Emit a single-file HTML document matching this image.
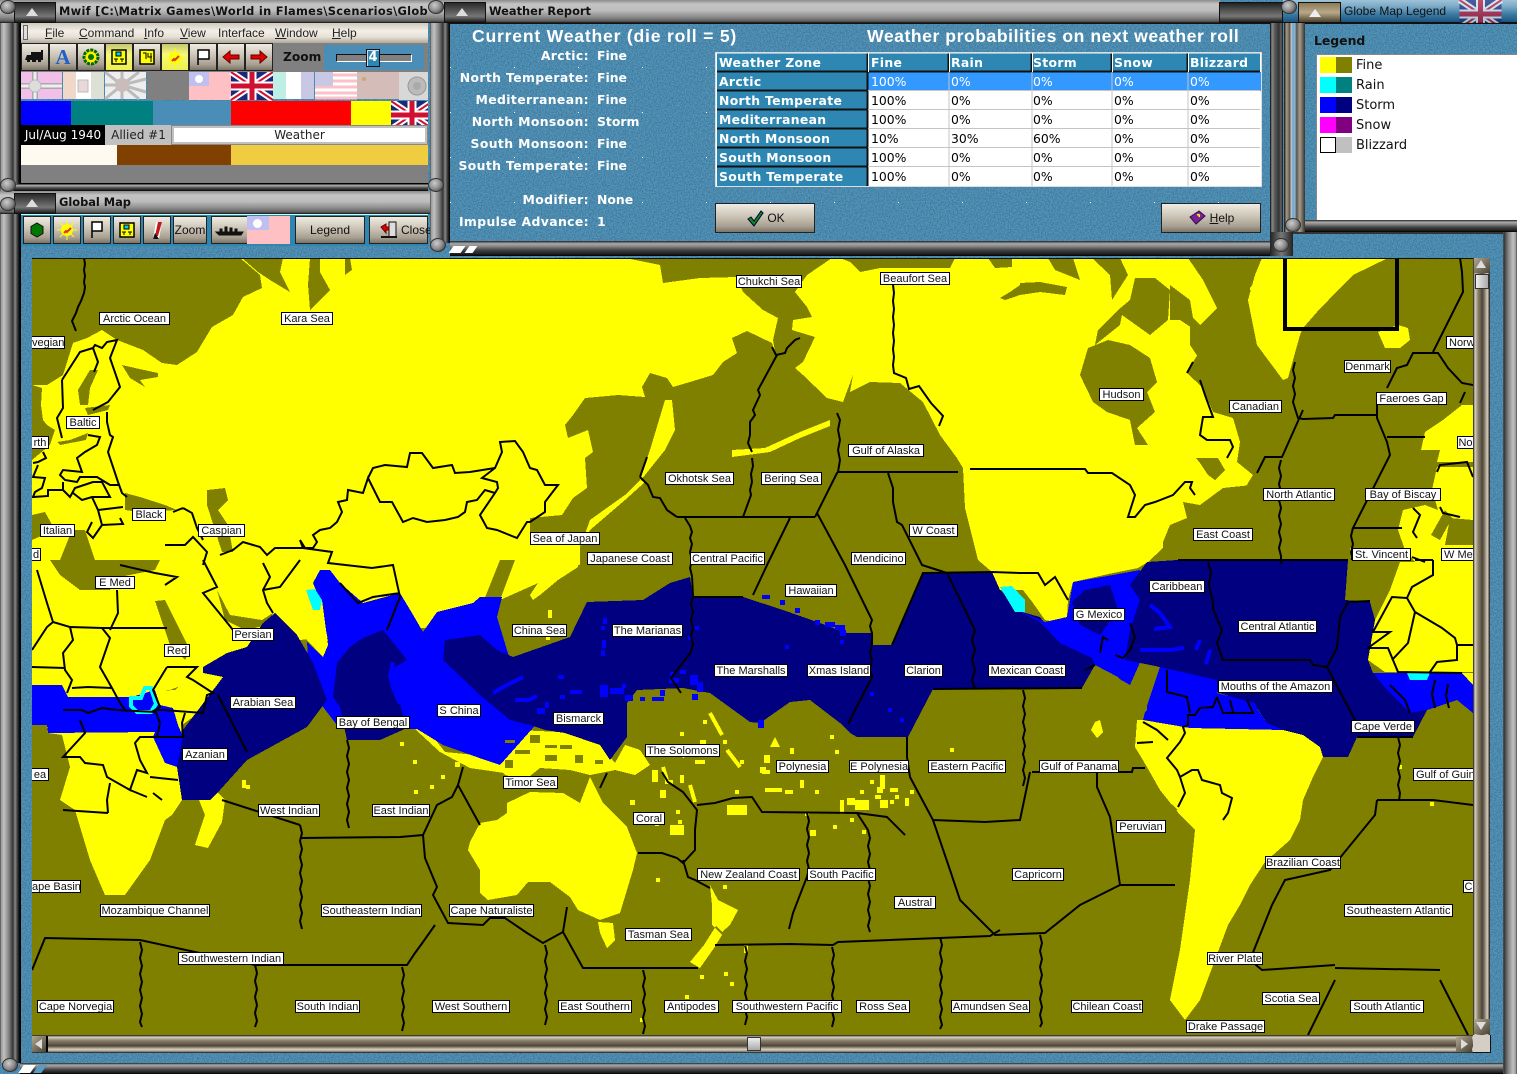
<!DOCTYPE html>
<html lang="en"><head><meta charset="utf-8"><title>Mwif Weather Report</title>
<style>
html,body{margin:0;padding:0;background:#000;width:1517px;height:1074px;overflow:hidden}
#p{position:relative;width:1517px;height:1074px;overflow:hidden;background:#4a8db6;font-family:"Liberation Sans",sans-serif}
#p div,#p span.a{position:absolute;box-sizing:border-box}
.t{background:linear-gradient(#8c8c8c,#c4c4c4 18%,#bdbdbd 45%,#8a8a8a 75%,#5c5c5c 92%,#111);height:23px}
.tt{font:bold 11.4px "DejaVu Sans",sans-serif;color:#111;white-space:nowrap;line-height:14px;overflow:hidden}
.blk{background:linear-gradient(#2a2a2a,#555 40%,#777 70%,#1c1c1c);border:1px solid #111;width:42px;height:21px;top:2px}
.blk:after{content:"";position:absolute;left:11px;top:5px;border:6px solid transparent;border-top:0;border-bottom:8px solid #ddd}
.vf{background:linear-gradient(90deg,#333 0,#999 1px,#c0c0c0 4px,#808080 9px,#333 13px,#8a8a8a 15px,#2a2a2a 18px,#000 20px)}
.hf{background:linear-gradient(#222,#aaa 18%,#888 35%,#444 60%,#222 85%,#000)}
.sc{width:16px;height:14px;border-radius:50%;background:radial-gradient(circle at 40% 35%,#ccc,#8c8c8c 50%,#444 85%);border:1px solid #333}
.b{background:linear-gradient(#f0ece4,#e0dace 20%,#c6bfb1 50%,#a79f90 80%,#7b7366);border:1px solid #222;font-size:12px;color:#111;text-align:center;white-space:nowrap}
.by{background:linear-gradient(#c6c67a,#f7f77a 40%,#eeee50);}
.l{font:bold 12.4px "DejaVu Sans",sans-serif;color:#fff;white-space:nowrap;line-height:16px;text-align:right;letter-spacing:.38px}
.v{font:bold 12.4px "DejaVu Sans",sans-serif;color:#fff;white-space:nowrap;line-height:16px}
.h{font:bold 17.6px "Liberation Sans",sans-serif;color:#fff;white-space:nowrap}
.c{font:12.4px/20px "DejaVu Sans",sans-serif;white-space:nowrap;overflow:hidden;padding-left:2px;height:19px}
.cb{color:#fff;font-weight:bold;letter-spacing:.33px}
.m{position:absolute;background:#fff;border:1px solid #000;font-size:11px;line-height:12px;color:#111;text-align:center;white-space:nowrap;height:13px;overflow:hidden;font-family:"Liberation Sans",sans-serif}
.mn{font-size:12px;color:#222;top:27px;white-space:nowrap;line-height:13px}
.mn u{text-decoration:underline}
.lg{font:13px/16px "DejaVu Sans",sans-serif;color:#111;left:1356px;white-space:nowrap}
.sw{width:16px;height:16px;left:1320px}.sw2{width:16px;height:16px;left:1336px}
</style></head><body><div id="p">

<svg style="position:absolute;left:0;top:0" width="1517" height="1074" viewBox="0 0 1517 1074">
<defs><filter id="nz" x="0" y="0" width="100%" height="100%"><feTurbulence type="fractalNoise" baseFrequency=".75" numOctaves="2" seed="3"/><feColorMatrix values="0 0 0 0 0 0 0 0 0 0 0 0 0 0 0 .55 0 0 0 -.18"/></filter>
<pattern id="spk" width="64" height="45" patternUnits="userSpaceOnUse" x="2" y="22"><rect width="1" height="1" fill="#fff"/></pattern></defs>
<rect width="1517" height="1074" fill="#5398c0"/>
<rect width="1517" height="1074" filter="url(#nz)"/>
<rect x="450" y="24" width="820" height="217" fill="url(#spk)"/>
</svg>

<!-- main left frame -->
<div class="vf" style="left:0;top:23px;width:21px;height:1040px"></div>
<div class="vf" style="left:1503px;top:232px;width:14px;height:842px;transform:scaleX(-1)"></div>

<!-- Mwif window title -->
<div class="t" style="left:0;top:0;width:430px"></div>
<div class="blk" style="left:14px"></div>
<div class="sc" style="left:0;top:0"></div>
<div class="tt" style="left:59px;top:4px;width:369px;letter-spacing:.3px">Mwif [C:\Matrix Games\World in Flames\Scenarios\Global War.wif]</div>
<!-- menu -->
<div style="left:21px;top:23px;width:407px;height:20px;background:linear-gradient(#cfc9bd,#f3efe7 40%,#e6e0d6 70%,#b0a99c)"></div>
<div style="left:23px;top:25px;width:5px;height:15px;border:1px solid #666;background:#ddd"></div>
<div class="mn" style="left:45px"><u>F</u>ile</div>
<div class="mn" style="left:79px"><u>C</u>ommand</div>
<div class="mn" style="left:144px"><u>I</u>nfo</div>
<div class="mn" style="left:180px"><u>V</u>iew</div>
<div class="mn" style="left:218px">Interface</div>
<div class="mn" style="left:275px"><u>W</u>indow</div>
<div class="mn" style="left:332px"><u>H</u>elp</div>

<!-- toolbar 1 -->
<div style="left:21px;top:43px;width:407px;height:29px;background:#808080"></div>
<div class="b" style="left:21px;top:43px;width:28px;height:28px"><svg width="26" height="26" viewBox="0 0 26 26"><path d="M5 11h4v-3h10v-2h2v10h-2v2h-3v-2h-2v2h-4v-2h-2v2h-3v-2h-2z" fill="#111"/></svg></div>
<div class="b" style="left:49px;top:43px;width:28px;height:28px;font:bold 21px/26px 'Liberation Serif',serif;color:#2060c8">A</div>
<div class="b" style="left:77px;top:43px;width:28px;height:28px"><svg width="26" height="26" viewBox="0 0 26 26"><circle cx="13" cy="13" r="7" fill="#fff000" stroke="#060" stroke-width="3" stroke-dasharray="3 1"/><circle cx="13" cy="13" r="3" fill="#070"/></svg></div>
<div class="b by" style="left:105px;top:43px;width:28px;height:28px"><svg width="26" height="26" viewBox="0 0 26 26"><rect x="6" y="6" width="14" height="14" fill="#ff0" stroke="#000" stroke-width="1.5"/><rect x="10" y="8" width="5" height="4" fill="#0cf" stroke="#000"/><path d="M8 15h4M14 15h4M10 15v3M16 15v3" stroke="#000"/></svg></div>
<div class="b" style="left:133px;top:43px;width:28px;height:28px"><svg width="26" height="26" viewBox="0 0 26 26"><rect x="6" y="6" width="14" height="14" fill="#ff0" stroke="#000" stroke-width="1.5"/><path d="M9 9h3v6M14 9v4h4M17 9v9" stroke="#000" fill="none"/></svg></div>
<div class="b by" style="left:161px;top:43px;width:28px;height:28px"><svg width="26" height="26" viewBox="0 0 26 26"><circle cx="13" cy="14" r="6" fill="#ff0"/><path d="M13 4v20M3 14h20M6 7l14 14M20 7L6 21" stroke="#ff0"/><path d="M10 17l2-2 1 1 4-4" stroke="#e03030" stroke-width="2" fill="none"/></svg></div>
<div class="b" style="left:189px;top:43px;width:28px;height:28px"><svg width="26" height="26" viewBox="0 0 26 26"><path d="M8 21V6h11v9H8" fill="#fff" stroke="#000" stroke-width="1.5"/></svg></div>
<div class="b" style="left:217px;top:43px;width:28px;height:28px"><svg width="26" height="26" viewBox="0 0 26 26"><path d="M5 13l7-6v4h9v4h-9v4z" fill="#e00000" stroke="#600"/></svg></div>
<div class="b" style="left:245px;top:43px;width:28px;height:28px"><svg width="26" height="26" viewBox="0 0 26 26"><path d="M21 13l-7-6v4H5v4h9v4z" fill="#e00000" stroke="#600"/></svg></div>
<div style="left:283px;top:50px;font:bold 12.2px 'DejaVu Sans',sans-serif;color:#111">Zoom</div>
<div style="left:324px;top:45px;width:100px;height:25px;background:#4a8db6"></div>
<div style="left:336px;top:54px;width:76px;height:8px;background:#808080;border:1px solid #111;border-top-color:#111;border-right-color:#fff;border-bottom-color:#fff"></div>
<div style="left:366px;top:49px;width:14px;height:18px;background:#2e87b2;border:1px solid #111;box-shadow:inset 1px 1px 0 #cde;color:#fff;font:bold 13px/16px 'DejaVu Sans',sans-serif;text-align:center">4</div>

<!-- flags -->
<svg style="position:absolute;left:21px;top:72px" width="407" height="29" viewBox="0 0 407 29">
<defs><g id="uk"><rect width="42" height="28" fill="#1a2a7a"/><path d="M0 0L42 28M42 0L0 28" stroke="#fff" stroke-width="6"/><path d="M0 0L42 28M42 0L0 28" stroke="#d01030" stroke-width="2"/><path d="M21 0V28M0 14H42" stroke="#fff" stroke-width="9"/><path d="M21 0V28M0 14H42" stroke="#d01030" stroke-width="5"/></g></defs>
<rect width="41" height="27" fill="#f2bfe8"/><path d="M0 14h41M14 0v27" stroke="#aaa" stroke-width="6"/><path d="M0 14h41M14 0v27" stroke="#eee" stroke-width="3"/><circle cx="14" cy="14" r="6" fill="#ddd" stroke="#bbb"/>
<g transform="translate(42)"><rect width="41" height="27" fill="#fff"/><rect width="13" height="27" fill="#f0d8c8"/><rect x="28" width="13" height="27" fill="#dde0d4"/><rect x="15" y="8" width="10" height="12" fill="#e8d8d8" stroke="#bbb"/></g>
<g transform="translate(84)"><rect width="41" height="27" fill="#eee"/><g stroke="#bbb" stroke-width="3"><path d="M17 13L0 0M17 13L17 0M17 13L34 0M17 13L41 7M17 13L41 20M17 13L34 27M17 13L17 27M17 13L0 27M17 13L0 13"/></g><circle cx="17" cy="13" r="7" fill="#cbbcbc"/></g>
<rect x="126" width="42" height="28" fill="#808080"/>
<g transform="translate(168)"><rect width="42" height="28" fill="#ffc0c4"/><rect width="20" height="14" fill="#bfbff0"/><circle cx="10" cy="7" r="4" fill="#fff"/></g>
<use href="#uk" x="210"/>
<g transform="translate(252)"><rect width="41" height="27" fill="#fff"/><rect width="13" height="27" fill="#bfeee4"/><rect x="28" width="13" height="27" fill="#c8c8e4"/></g>
<g transform="translate(294)"><rect width="42" height="27" fill="#fff"/><path d="M0 3h42M0 9h42M0 15h42M0 21h42M0 26h42" stroke="#fbc0c8" stroke-width="3"/><rect width="18" height="14" fill="#c8c8e4"/></g>
<g transform="translate(336)"><rect width="42" height="27" fill="#d4bcb8"/><circle cx="7" cy="7" r="2" fill="#c8aa70"/></g>
<g transform="translate(378)"><rect width="29" height="28" fill="#d8d8d8"/><circle cx="18" cy="14" r="9" fill="#bbb" stroke="#999"/><circle cx="18" cy="14" r="4" fill="#aaa"/></g>
</svg>

<!-- colour bar -->
<div style="left:21px;top:101px;width:50px;height:24px;background:#0000ff"></div>
<div style="left:71px;top:101px;width:82px;height:24px;background:#008080"></div>
<div style="left:153px;top:101px;width:78px;height:24px;background:#4a8db6"></div>
<div style="left:231px;top:101px;width:120px;height:24px;background:#ff0000"></div>
<div style="left:351px;top:101px;width:40px;height:24px;background:#ffff00"></div>
<svg style="position:absolute;left:391px;top:101px" width="37" height="24" viewBox="0 0 37 24"><use href="#uk"/></svg>
<!-- status -->
<div style="left:21px;top:125px;width:84px;height:20px;background:#000;color:#fff;font:12px/20px 'DejaVu Sans',sans-serif;text-align:center;white-space:nowrap">Jul/Aug 1940</div>
<div style="left:105px;top:125px;width:67px;height:20px;background:#c0c0c0;color:#222;font:12px/20px 'DejaVu Sans',sans-serif;text-align:center;white-space:nowrap">Allied #1</div>
<div style="left:171px;top:125px;width:257px;height:20px;background:#fff;border:3px solid #c0c0c0;outline:1px solid #888;outline-offset:-1px;color:#222;font:12px/15px 'DejaVu Sans',sans-serif;text-align:center">Weather</div>
<div style="left:21px;top:145px;width:96px;height:20px;background:#fffaf0"></div>
<div style="left:117px;top:145px;width:114px;height:20px;background:#804000"></div>
<div style="left:231px;top:145px;width:197px;height:20px;background:#f0cc40"></div>
<div style="left:21px;top:165px;width:407px;height:19px;background:#808080;border-bottom:1px solid #000"></div>
<div class="hf" style="left:14px;top:184px;width:414px;height:7px"></div>

<!-- Global map title -->
<div class="t" style="left:0;top:191px;width:430px"></div>
<div class="blk" style="left:14px;top:193px"></div>
<div class="sc" style="left:0;top:178px"></div>
<div class="sc" style="left:0;top:197px"></div>
<div class="tt" style="left:59px;top:195px;width:300px">Global Map</div>

<!-- toolbar 2 -->
<div style="left:21px;top:214px;width:407px;height:32px;background:#2e87b2;border-top:1px solid #cfe"></div>
<div class="b" style="left:23px;top:216px;width:28px;height:28px"><svg width="26" height="26" viewBox="0 0 26 26"><path d="M13 6l6 3.5v7L13 20l-6-3.5v-7z" fill="#007800" stroke="#111"/></svg></div>
<div class="b" style="left:53px;top:216px;width:28px;height:28px"><svg width="26" height="26" viewBox="0 0 26 26"><circle cx="13" cy="13" r="6" fill="#ff0"/><path d="M13 3v20M3 13h20M6 6l14 14M20 6L6 20" stroke="#ff0"/><path d="M10 16l2-2 1 1 4-4" stroke="#e03030" stroke-width="2" fill="none"/></svg></div>
<div class="b" style="left:83px;top:216px;width:28px;height:28px"><svg width="26" height="26" viewBox="0 0 26 26"><path d="M8 21V5h10v9H8" fill="#fff" stroke="#000" stroke-width="1.5"/></svg></div>
<div class="b" style="left:113px;top:216px;width:28px;height:28px"><svg width="26" height="26" viewBox="0 0 26 26"><rect x="6" y="6" width="14" height="14" fill="#ff0" stroke="#000" stroke-width="1.5"/><rect x="10" y="8" width="5" height="4" fill="#0cf" stroke="#000"/><path d="M8 15h4M14 15h4M10 15v3M16 15v3" stroke="#000"/></svg></div>
<div class="b" style="left:143px;top:216px;width:28px;height:28px"><svg width="26" height="26" viewBox="0 0 26 26"><path d="M9 22L12 5h6l-3 17z" fill="#fff"/><path d="M14 5h4l-4 14h-3z" fill="#c01818"/><path d="M9 22l2-6 4 6z" fill="#111"/></svg></div>
<div class="b" style="left:173px;top:216px;width:34px;height:28px;line-height:26px;font-size:12px">Zoom</div>
<div class="b" style="left:211px;top:216px;width:37px;height:28px"><svg width="35" height="26" viewBox="0 0 35 26"><path d="M4 15h27l-2 3H7zM8 15v-3h2v3M13 15v-5h2v5M18 15v-4h2v4M23 15v-3h2v3" fill="#111" stroke="#111"/></svg></div>
<div style="left:247px;top:216px;width:43px;height:28px;background:#ffc0c4"></div>
<div style="left:247px;top:216px;width:22px;height:14px;background:#bfbff0"></div>
<div style="left:253px;top:219px;width:9px;height:9px;border-radius:50%;background:#fff"></div>
<div class="b" style="left:295px;top:216px;width:70px;height:28px;line-height:26px">Legend</div>
<div class="b" style="left:369px;top:216px;width:59px;height:28px;line-height:26px;text-align:left;padding-left:31px">Close</div>
<svg style="position:absolute;left:380px;top:220px" width="20" height="20" viewBox="0 0 20 20"><path d="M9 2h7v15H9z" fill="#ddd" stroke="#111"/><path d="M1 7l5-3v3h3v3H6v3z" fill="#d00" stroke="#600"/><path d="M1 17h16" stroke="#111" stroke-width="2"/></svg>

<!-- MAP -->
<div style="left:32px;top:258px;width:1441px;height:777px;overflow:hidden;background:#808000;border-top:1px solid #111">
<svg style="position:absolute;left:-32px;top:-259px" width="1517" height="1074" viewBox="0 0 1517 1074" shape-rendering="crispEdges">
<g fill="#ffff00">
<polygon points="240,258 625,258 660,265 663,283 700,278 737,277 743,292 763,310 778,318 773,340 775,352 772,343 747,331 732,338 737,353 723,362 713,375 690,382 673,387 667,378 650,373 642,387 645,397 618,395 585,398 573,415 565,425 568,438 588,430 593,452 585,458 587,488 573,498 562,515 530,518 530,540 580,545 580,565 560,578 530,600 505,600 505,620 300,640 170,690 32,700 32,385 47,385 63,375 73,343 87,338 102,330 117,340 143,350 162,363 177,365 197,352 212,327 233,315 243,297 262,288 260,275"/>
<!-- Africa -->
<polygon points="32,697 175,690 205,660 260,640 230,690 182,725 178,757 177,767 182,800 172,815 165,820 150,860 125,895 105,895 90,860 75,810 60,800 70,767 62,735 48,733 32,725"/>
<polygon points="197,795 215,790 225,800 222,822 208,848 195,845 205,815"/>
<!-- Indonesia -->
<polygon points="415,729 427,729 445,752 475,755 522,768 518,775 470,768 440,752"/>
<polygon points="453,729 490,729 485,745 470,748 455,742"/>
<polygon points="497,729 560,732 590,738 600,745 615,763 625,745 640,750 650,765 635,775 615,770 590,775 570,770 540,768 525,780 505,775 492,760"/>
<!-- Australia -->
<polygon points="480,823 470,842 468,850 480,870 480,893 488,900 517,895 528,882 550,882 570,897 578,910 600,920 620,913 633,870 637,853 627,827 603,803 590,777 580,803 563,793 530,792 507,803 507,813 497,820"/>
<polygon points="598,922 613,923 615,940 607,948 600,933"/>
<polygon points="710,885 718,900 738,910 730,925 722,932 716,926 704,945 690,962 700,968 714,948 722,935 712,925 712,905"/>
<!-- N America -->
<polygon points="832,258 1273,258 1250,288 1257,345 1283,380 1288,378 1300,335 1303,328 1317,312 1340,288 1353,275 1388,258 1262,258 1188,258 1203,280 1217,308 1200,325 1207,340 1193,362 1187,373 1203,388 1213,412 1233,418 1240,442 1237,462 1253,475 1252,485 1223,488 1200,505 1183,502 1187,518 1170,525 1163,542 1163,548 1148,562 1138,568 1113,573 1073,582 1068,600 1067,617 1055,622 1045,620 1033,603 1023,590 1000,590 992,572 978,560 965,508 963,468 957,458 940,435 923,402 900,383 870,382 850,392 853,375 843,402 827,398 803,375 795,368 803,362 815,337 792,330 793,320 812,317 807,307 795,292 807,275"/>
<polygon points="1378,332 1398,325 1408,328 1410,340 1400,348 1385,348"/>
<!-- Aleutian chain -->
<polygon points="732,450 765,448 800,432 830,420 830,426 800,438 770,452 732,457"/>
<polygon points="640,480 650,450 665,400 672,400 675,430 665,450 645,475"/>
<polygon points="640,480 625,495 590,520 580,548 590,530 625,500 645,482"/>
<!-- S America -->
<polygon points="1143,720 1190,728 1283,730 1303,735 1320,747 1323,757 1313,777 1303,800 1300,820 1290,840 1265,862 1250,885 1240,905 1228,925 1215,960 1200,1000 1185,1020 1170,1000 1180,950 1190,880 1195,830 1180,815 1160,790 1147,767 1135,747 1137,720"/>
<!-- West Europe / West Africa -->
<polygon points="1473,405 1462,405 1443,420 1425,432 1421,450 1440,450 1437,462 1473,462"/>
<polygon points="1473,467 1437,467 1432,490 1438,510 1425,505 1403,510 1398,530 1405,550 1415,562 1400,562 1390,590 1375,620 1373,630 1368,660 1385,672 1473,672"/>
<polygon points="1462,673 1473,673 1473,685"/>
</g>
<g fill="#808000">
<!-- Arctic islands -->
<polygon points="242,258 283,258 280,272 290,292 270,280 258,272"/>
<polygon points="310,258 320,258 320,272 330,290 310,310 308,285"/>
<polygon points="345,258 350,258 352,270 345,275"/>
<polygon points="840,258 955,258 950,268 880,268 860,272 850,262"/>
<polygon points="988,258 1012,258 1012,267 995,268"/>
<polygon points="1000,298 1010,292 1023,283 1020,295 1005,300"/>
<polygon points="1020,283 1040,282 1067,287 1065,295 1040,292 1020,295"/>
<polygon points="1048,258 1073,258 1080,280 1055,270"/>
<polygon points="1092,258 1120,258 1128,275 1112,300 1110,275"/>
<polygon points="1135,278 1155,278 1170,290 1168,320 1150,335 1122,315 1120,325 1095,345 1098,330 1118,310 1130,300"/>
<polygon points="1170,285 1190,300 1195,330 1180,320 1170,320"/>
<polygon points="1190,315 1215,340 1200,360 1190,345"/>
<polygon points="1080,375 1088,348 1108,340 1130,345 1150,358 1157,382 1147,392 1155,412 1137,428 1148,445 1135,445 1130,420 1107,412 1093,402"/>
<polygon points="1196,458 1218,458 1225,470 1215,480 1208,475 1200,463"/>
<!-- Barents/Baltic/etc -->
<polygon points="122,365 135,368 158,373 158,377 140,380 145,387 130,378"/>
<polygon points="90,370 98,370 90,388 88,405 80,405 78,390"/>
<polygon points="85,408 110,405 108,410 88,415"/>
<polygon points="57,442 70,440 88,433 86,440 60,445"/>
<polygon points="32,385 42,388 41,405 43,420 47,425 55,430 50,445 32,460"/>
<polygon points="125,493 140,497 165,505 177,510 140,512 125,510"/>
<polygon points="207,490 225,488 228,500 218,510 228,525 233,552 222,552 207,505"/>
<polygon points="32,515 45,512 55,530 32,540"/>
<polygon points="72,530 85,530 95,560 60,560"/>
<polygon points="50,560 160,560 155,570 115,578 110,590 80,590 60,575"/>
<polygon points="155,601 165,600 190,650 185,660 170,645"/>
<polygon points="217,590 230,615 262,620 273,613 268,625 245,630 225,620"/>
<polygon points="500,560 515,560 500,600 512,600 497,620 500,643 480,627 480,610"/>
<polygon points="500,600 590,560 590,602 570,637 513,657 507,640 497,660 480,627"/>
<polygon points="32,713 45,713 48,733 32,733"/>
<polygon points="1256,470 1270,470 1262,490 1245,488"/>
<polygon points="1450,518 1473,520 1473,545 1445,545"/>
<polygon points="1440,462 1473,462 1473,467 1437,467"/>
<polygon points="1431,535 1445,510 1452,518 1440,540"/>
</g>
<!-- Greenland + Formosa stripe -->
<polygon fill="#ffff00" points="1262,258 1388,258 1353,275 1340,288 1317,312 1303,328 1300,335 1288,378 1283,380 1257,345 1248,300 1255,275"/>
<polygon fill="#ffff00" points="530,595 540,580 560,565 573,550 580,550 578,567 558,580 540,595 533,600"/>
<!-- Weather band -->
<polygon fill="#0000ff" points="320,570 330,570 340,583 363,603 400,593 412,613 423,632 437,612 473,603 480,597 502,597 497,617 510,660 540,680 540,720 500,765 485,760 443,745 417,729 340,729 310,690 307,642 323,657 328,640 320,600 313,583"/>
<polygon fill="#000080" points="275,613 297,635 313,663 327,700 307,727 247,760 220,790 210,800 182,800 177,767 178,757 183,730 223,677 203,673 203,667 227,653 247,647 263,623"/>
<polygon fill="#000080" points="363,638 383,630 407,660 390,670 407,728 380,740 347,740 340,707 333,697 337,663 350,647"/>
<polygon fill="#000080" points="513,657 570,637 587,602 643,600 670,583 690,577 693,597 743,597 783,610 820,623 847,633 872,633 873,645 892,645 923,573 992,572 1000,590 1022,612 1040,617 1060,643 1092,658 1095,665 1082,688 933,689 908,737 857,737 850,733 840,723 810,700 790,702 760,723 750,722 710,693 683,688 637,690 627,703 627,737 610,760 600,745 565,733 545,730 530,725 510,720 480,695 443,660 445,640 480,635 497,650"/>
<path d="M393 662l-3 14 4 14 6 14M493 693l14-8 16-8M450 700l15 12 20 6M440 660l10 20 10 16M515 700h14l8-4M470 708l8 4" fill="none" stroke="#0000ff" stroke-width="4"/>
<polygon fill="#0000ff" points="1000,588 1022,612 1045,622 1067,617 1073,582 1113,575 1140,570 1150,640 1130,685 1095,665 1092,658 1060,643 1040,622 1020,612"/>
<polygon fill="#000080" points="1147,562 1177,560 1348,560 1345,600 1370,602 1375,620 1368,660 1373,673 1387,690 1410,713 1427,710 1413,737 1357,737 1348,757 1323,757 1320,747 1303,735 1283,730 1267,723 1255,705 1220,693 1180,680 1160,667 1125,660 1130,630 1140,600 1130,585"/>
<polygon fill="#000080" points="1085,590 1110,585 1118,610 1100,635 1080,625 1072,602"/>
<path d="M1150 605l10 8 10 14 -16 2M1200 640l-4 10M1140 650h30l14-2M1210 650l-4 14" fill="none" stroke="#0000ff" stroke-width="4"/>
<polygon fill="#0000ff" points="1143,720 1190,728 1283,730 1267,723 1258,710 1255,703 1217,693 1217,680 1160,667 1150,697 1145,712"/>
<polygon fill="#0000ff" points="1373,673 1462,673 1473,685 1473,713 1457,700 1427,710 1410,713 1387,690"/>
<polygon fill="#0000ff" points="32,685 62,685 68,697 132,697 155,690 160,705 173,708 178,725 183,737 177,767 165,763 153,737 155,732 48,733 47,725 32,725"/>
<polygon fill="#808000" points="1023,690 1082,688 1095,665 1118,677 1127,688 1138,687 1147,697 1147,710 1137,720 1135,747 1145,767 1153,787 1178,810 1100,830 1023,800"/>
<polygon fill="#ffff00" points="1095,722 1100,720 1103,732 1097,738 1091,730"/>
<!-- India wedge -->
<polygon fill="#ffff00" points="307,640 323,657 328,645 322,600 305,600"/>
<!-- cyan -->
<g fill="#00ffff">
<polygon points="306,590 315,589 322,600 320,610 313,610"/>
<polygon points="1000,587 1012,586 1025,600 1025,612 1015,612"/>
<polygon points="1407,673 1430,673 1427,680 1410,680"/>
</g>
<path d="M131 698h10l4-10h6l5 16-5 8h-14l-6-6z" fill="none" stroke="#00ffff" stroke-width="4"/>
<!-- small blue -->
<path fill="#0000ff" d="M601 626h4v4h-4zM603 618h4v6h-4zM602 640h4v8h-4zM601 650h4v6h-4zM688 636h4v4h-4zM695 626h4v4h-4zM670 672h4v4h-4zM680 670h6v4h-6zM690 675h8v10h-8zM697 682h6v10h-6zM669 678h10v5h-10zM692 694h6v6h-6zM660 690h5v6h-5zM625 695h8v6h-8zM640 697h5v4h-5zM652 697h12v4h-12zM610 688h14v6h-14zM600 685h8v12h-8zM570 690h12v4h-12zM560 695h5v4h-5zM622 684h4v4h-4zM558 675h6v4h-6zM545 702h4v6h-4zM537 708h8v6h-8zM762 595h8v4h-8zM780 600h5v5h-5zM795 608h5v5h-5zM815 620h5v5h-5zM825 622h10v5h-10zM835 625h10v5h-10zM840 630h6v6h-6zM785 645h4v4h-4zM840 640h4v4h-4zM870 692h4v4h-4zM888 708h4v4h-4zM900 718h4v4h-4zM758 720h6v8h-6z"/>
<!-- dots yellow -->
<path fill="#ffff00" d="M546 636h4v4h-4zM548 610h4v4h-4zM548 614h4v4h-4zM703 720h4v4h-4zM680 732h4v4h-4zM700 740h6v4h-6zM714 745h6v8h-6zM740 760h4v4h-4zM723 740h4v4h-4zM695 760h10v4h-10zM735 790h4v4h-4zM764 755h6v8h-6zM775 737l5 10h-10zM790 748h4v6h-4zM762 770h8v4h-8zM830 735h4v4h-4zM835 750h4v4h-4zM785 790h8v4h-8zM800 780h4v8h-4zM815 790h4v4h-4zM870 780h4v4h-4zM880 775h5v14h-5zM890 788h8v4h-8zM905 798h4v8h-4zM950 748h4v4h-4zM960 760h4v8h-4zM860 790h4v4h-4zM880 800h8v8h-8zM910 790h4v4h-4zM840 800h4v14h-4zM855 800h14v10h-14zM890 800h4v4h-4zM875 795h6v4h-6zM805 812h4v4h-4zM810 830h6v6h-6zM833 825h4v4h-4zM850 818h4v4h-4zM862 830h4v4h-4zM895 795h4v4h-4zM760 767h6v6h-6zM652 770h6v12h-6zM688 745h5v10h-5zM660 790h6v8h-6zM665 780h8v4h-8zM680 775h4v8h-4zM630 800h5v5h-5zM455 762h5v5h-5zM400 742h4v4h-4zM413 760h4v4h-4zM430 785h4v4h-4zM414 790h4v4h-4zM441 775h4v4h-4zM242 780h4v8h-4zM246 785h4v4h-4zM640 815h8v4h-8zM678 820h4v4h-4zM676 810h4v4h-4zM670 825h14v10h-14zM655 822h4v4h-4zM723 885h4v4h-4zM656 878h4v4h-4zM700 975h4v4h-4zM724 972h4v4h-4zM730 982h4v4h-4zM685 995h4v4h-4zM640 1018h4v4h-4zM744 945h4v8h-4zM1398 765h4v4h-4zM1430 802h4v4h-4zM1285 820h4v4h-4zM1240 810h10v4h-10zM1310 745h5v5h-5zM1350 548h5v10h-5zM727 805h20v10h-20zM765 788h17v4h-17zM847 798h8v7h-8zM877 787h6v6h-6z"/>
<path d="M710 713L722 735M727 750L740 767M663 767L667 780M690 785L695 802M675 745L685 757" stroke="#ff0" stroke-width="4" fill="none"/>
<path fill="#808000" d="M505 740h10v3h-10zM515 750h15v4h-15zM545 745h12v3h-12zM530 735h10v8h-10zM560 745h12v4h-12zM575 755h8v8h-8zM595 760h8v4h-8zM545 755h12v6h-12zM505 760h8v8h-8z"/>
<!-- boundaries -->
<g fill="none" stroke="#000" stroke-width="2" stroke-linejoin="miter" shape-rendering="auto">
<path d="M84 258l1 6-1 6 1 6-1 6 1 5-1 6 -3 8-3 6-2 6-4 8 2 5 2 5"/>
<path d="M62 380L80 352 93 348 95 345 102 348 107 342 117 340 110 358 120 387 108 402 93 410M93 348L98 362 94 372M62 380L63 408 57 418 62 438M107 412V422L110 435 113 437 108 452 118 482 122 493 127 497M88 435L100 437 97 445 85 452 77 458 82 472 63 470 60 475 65 480 77 482 80 477 97 477 110 485 120 485M43 452L46 458 38 462 33 463M38 465L33 477 45 478 42 488 35 492 33 497 48 496 48 490 63 490 63 482M63 490L70 497 75 488 93 482 102 482 110 497 92 497 82 500 73 493M92 497L98 510 123 507M98 510L102 525 123 524 120 518M92 522L87 532 93 538 102 525M183 508L192 513 197 528 203 540M173 512L183 508"/>
<path d="M165 545L185 545 193 537 207 552 203 565M220 555L233 550 243 542 260 547 267 555 275 548 303 548 300 540 305 548 313 548 317 542 313 535 320 530 330 528 337 522 342 512 338 502 347 500 348 490 363 493 368 478 380 502 392 502 403 522 413 518 427 522 445 520 458 517 465 512 467 502 477 500 485 490 495 493 480 515 487 528 497 530 517 538 527 522 530 522 545 512 545 502 558 485 545 485 537 470 530 468 523 452 515 441 500 442 502 452 495 468 470 472 455 473 452 465 433 468 422 453 410 453 407 467 385 465 373 468 368 478M495 468L482 478 497 482 498 488 495 493"/>
<path d="M303 548L332 552 328 563 372 568 393 565 400 597 387 630M340 583L358 603 373 597 400 593M263 563L270 577 263 590 267 603 273 613M300 560L280 587 263 590M203 560L217 587 203 593 225 620 233 630M120 565L155 573 177 577 165 585M37 570L47 603 53 622 47 627 32 650M53 622L70 627 73 640 63 653 65 670 72 680 67 693M70 627L102 628 110 638 100 667 112 688 120 703 125 710M117 590L118 613 110 630M102 628L167 628M32 667L65 668M72 688L88 687 112 688M167 667L153 690 160 707 155 710 163 710 203 713 207 695 213 693 193 680 187 677 197 667 167 667M155 710L160 723 157 737 183 737 182 723 185 713M218 695L247 752M63 710L82 710 88 713 102 708 117 710 155 712M80 720L85 733 63 757 80 757 85 763 103 765 107 777 130 790 137 770 147 773 140 760 135 743 140 737 157 737M110 783L107 800 108 813M63 810L108 813M150 777L178 780M153 793L162 800M147 797L130 790"/>
<path d="M463 767L458 785M347 740l2 8-2 8 2 8-2 8 2 8-2 8 2 8-2 8 2 8-2 8 2 8M300 825l2 8-2 8 2 8-2 8 2 8-2 8 2 8-2 8 2 8-2 8 2 8-2 8 2 8M255 965l2 8-2 8 2 8-2 8 2 8-2 8 2 8-2 6M140 942l2 8-2 8 2 8-2 8 2 8-2 8 2 8-2 8 2 8-2 8 2 5M32 970L45 938 140 940 255 965M222 800L300 825M458 785L480 825M458 785L452 797 437 805 423 835 400 837 300 838M423 835L425 858 437 887 433 895 448 923 483 925 490 918 505 918 527 933 543 943 563 932 567 907M435 925L423 942 415 953 407 965 255 965M402 967l2 8-2 8 2 8-2 8 2 8-2 8 2 8-2 8M545 945l2 8-2 8 2 8-2 8 2 8-2 8 2 8-2 8 2 8-2 8M563 932L583 968 698 968M643 970l2 8-2 8 2 8-2 8 2 8-2 8 2 8-2 8M683 860L688 877 695 880 710 888M638 853L662 853 677 858 683 863 695 850 695 830 697 810 683 792 668 782 662 772M697 805L715 803 733 798 752 797 762 812 857 813 887 817 905 835M807 813l2 8-2 8 2 8-2 8 2 8-2 8 2 8-2 8 -4 10-10 26-4 16M715 945L790 944 833 945 838 942 990 936 1000 930M745 945l2 8-2 8 2 8-2 8 2 8-2 8 2 8-2 8 2 8-2 8M832 947l2 8-2 8 2 8-2 8 2 8-2 8 2 8-2 8 2 8-2 8M857 813L868 830l2 8-2 8 2 8-2 8 2 8-2 8 2 8-2 8 2 8-2 8 2 8-2 8 2 6M600 788L607 773"/>
<path d="M933 820L985 822 1020 820 1030 772M907 737L907 757 910 777 933 820 950 870 960 900 995 935 1045 933 1080 905 1120 885 1175 885M1023 690l2 8-2 8 2 8-2 8 2 8-2 8 2 8-2 8 2 8-2 8 2 8-2 8M1032 772L1132 772 1133 768 1145 768M1097 773L1097 787 1110 817 1120 885M1040 935l2 8-2 8 2 8-2 8 2 8-2 8 2 8-2 8 2 8-2 8 2 8-2 4M940 937l2 8-2 8 2 8-2 8 2 8-2 8 2 8-2 8 2 8-2 8 2 8-2 4"/>
<path d="M772 347L776 355 785 353 787 348 795 340 800 338M777 355L758 390 760 395 753 410 755 415 750 422 750 435 748 443 752 452M752 458l1 8-2 8 1 8-2 8 1 5-8 22M677 517L815 517M640 477L648 485 653 497 660 498 667 510 677 517M647 457L640 477M685 518l5 8 2 6-2 6 2 6-2 8 2 8 -2 8 2 8 1 20-2 8 2 8-2 8 2 8-2 8 2 8 -2 8 -20 26 10 15M790 518L768 563 753 595M815 517L837 473 838 472 840 460 838 450 840 440 838 430 840 420 837 413M838 472L958 472M888 473L893 488 893 502 897 522 902 525 922 565 947 573M817 513L845 565 872 620l-2 6 2 7 v12 l-2 8 2 8-2 8 2 8-24 47M692 597L743 597M892 645L923 573 992 572M947 573L975 630 972 640 975 650 972 660 975 670 972 680 975 689M933 689L1082 688"/>
<path d="M893 285l1 8-1 8 1 8-1 8 1 8-1 8 1 8-1 8 1 8-1 8 1 8 12 5 3 11 10-3 12 17 12 13-4 10M970 469L1085 469 1088 473 1112 473 1130 485 1135 495 1128 517 1135 517 1145 505 1155 502 1173 495 1185 482 1192 482 1190 488 1195 495M1187 373L1193 362M1200 380L1205 395 1213 417 1203 417 1200 435 1207 440 1230 440 1233 447 1227 458M1295 362l-2 8 2 8-2 8 2 8-2 8 5 16 5 1 30-1 2-3 42 0M1303 410L1282 457 1265 457 1257 473M1281 460l-2 8 2 8-2 8 2 8-2 8 2 8-2 8 2 8-2 8 2 8-2 8 2 8 0 8M1377 405L1377 418 1387 442 1390 455 1353 528 1402 528M1353 528l-2 8 2 8-2 8 1 8M1387 437L1425 437M1387 388L1397 368 1407 365 1413 353 1438 353 1448 368 1462 383 1473 385M1460 403L1465 392M1433 352L1463 292 1462 272 1460 258M1437 472L1440 465 1467 462 1473 477M1413 508L1420 515 1413 532 1417 538M1440 507L1443 513 1460 517M1178 560L1348 560M1412 557L1425 562M1415 560L1433 560"/>
<path d="M1208 562l3 10-2 12 4 19v6l9 21-5 13 6 17 87 0 3 5 14 2 10-19 3-31 8-15 22-1M1327 667L1355 720M1357 737L1413 737M1217 697L1213 707 1200 708 1195 715 1188 715 1188 725 1183 727 1185 733 1180 742 1167 758 1177 770 1180 777 1192 770 1198 770 1202 780 1220 785 1222 793 1232 798 1228 813 1223 820M1180 777L1185 793 1178 807M1168 740L1157 730 1143 722M1153 742L1137 743M1217 697L1223 713 1253 713 1247 700M1230 700L1233 712M1167 670L1167 692 1187 697 1190 713M1068 600L1055 577 1045 585 1038 573 1020 573 992 572M1130 623L1135 637 1130 650 1123 658 1115 655M1100 653L1103 637 1108 640M1085 670L1095 665M1407 598L1392 597 1373 632 1390 632 1368 648 1388 648 1398 672 1462 673M1407 598L1415 612 1408 643 1392 660M1415 612L1442 628 1455 638 1457 645 1473 645M1457 645L1457 660 1437 662 1430 672M1407 598L1412 587 1433 575 1433 560M1390 685L1405 700 1410 713M1435 680l-3 14 3 14M1448 684l-2 12 3 12M1398 737l2 8-2 8 2 8-2 8 2 8-2 8 2 8 -1 8M1377 800L1433 800 1473 805M1377 800L1375 815 1330 870 1285 880 1272 905 1250 960 1262 970 1335 965M1335 980L1308 1035M1440 980L1468 1035M1335 968L1440 970"/>
<path d="M1285 258V329H1397V258" stroke-width="4" stroke-linejoin="miter"/>
</g>
</svg>
</div>

<!-- labels -->
<div class="m" style="left:736px;top:275px;width:66px">Chukchi Sea</div>
<div class="m" style="left:880px;top:272px;width:70px">Beaufort Sea</div>
<div class="m" style="left:99px;top:312px;width:71px">Arctic Ocean</div>
<div class="m" style="left:281px;top:312px;width:52px">Kara Sea</div>
<div class="m" style="left:32px;top:336px;width:33px;border-left:0">vegian</div>
<div class="m" style="left:1446px;top:336px;width:27px;border-right:0;text-align:left;padding-left:2px">Norw</div>
<div class="m" style="left:1344px;top:360px;width:47px">Denmark</div>
<div class="m" style="left:1099px;top:388px;width:45px">Hudson</div>
<div class="m" style="left:1229px;top:400px;width:53px">Canadian</div>
<div class="m" style="left:1376px;top:392px;width:71px">Faeroes Gap</div>
<div class="m" style="left:66px;top:416px;width:34px">Baltic</div>
<div class="m" style="left:32px;top:436px;width:17px;border-left:0">rth</div>
<div class="m" style="left:1457px;top:436px;width:16px;border-right:0">No</div>
<div class="m" style="left:848px;top:444px;width:76px">Gulf of Alaska</div>
<div class="m" style="left:665px;top:472px;width:69px">Okhotsk Sea</div>
<div class="m" style="left:761px;top:472px;width:61px">Bering Sea</div>
<div class="m" style="left:1263px;top:488px;width:72px">North Atlantic</div>
<div class="m" style="left:1365px;top:488px;width:76px">Bay of Biscay</div>
<div class="m" style="left:132px;top:508px;width:34px">Black</div>
<div class="m" style="left:40px;top:524px;width:35px">Italian</div>
<div class="m" style="left:198px;top:524px;width:47px">Caspian</div>
<div class="m" style="left:909px;top:524px;width:49px">W Coast</div>
<div class="m" style="left:1193px;top:528px;width:60px">East Coast</div>
<div class="m" style="left:530px;top:532px;width:70px">Sea of Japan</div>
<div class="m" style="left:32px;top:548px;width:9px;border-left:0">d</div>
<div class="m" style="left:587px;top:552px;width:86px">Japanese Coast</div>
<div class="m" style="left:690px;top:552px;width:75px">Central Pacific</div>
<div class="m" style="left:851px;top:552px;width:55px">Mendicino</div>
<div class="m" style="left:1352px;top:548px;width:59px">St. Vincent</div>
<div class="m" style="left:1441px;top:548px;width:32px;border-right:0;text-align:left;padding-left:2px">W Me</div>
<div class="m" style="left:95px;top:576px;width:40px">E Med</div>
<div class="m" style="left:1149px;top:580px;width:56px">Caribbean</div>
<div class="m" style="left:785px;top:584px;width:52px">Hawaiian</div>
<div class="m" style="left:1073px;top:608px;width:52px">G Mexico</div>
<div class="m" style="left:1238px;top:620px;width:79px">Central Atlantic</div>
<div class="m" style="left:512px;top:624px;width:55px">China Sea</div>
<div class="m" style="left:612px;top:624px;width:71px">The Marianas</div>
<div class="m" style="left:232px;top:628px;width:42px">Persian</div>
<div class="m" style="left:164px;top:644px;width:26px">Red</div>
<div class="m" style="left:714px;top:664px;width:74px">The Marshalls</div>
<div class="m" style="left:807px;top:664px;width:64px">Xmas Island</div>
<div class="m" style="left:904px;top:664px;width:39px">Clarion</div>
<div class="m" style="left:988px;top:664px;width:78px">Mexican Coast</div>
<div class="m" style="left:1218px;top:680px;width:115px">Mouths of the Amazon</div>
<div class="m" style="left:230px;top:696px;width:66px">Arabian Sea</div>
<div class="m" style="left:437px;top:704px;width:44px">S China</div>
<div class="m" style="left:553px;top:712px;width:51px">Bismarck</div>
<div class="m" style="left:336px;top:716px;width:74px">Bay of Bengal</div>
<div class="m" style="left:1351px;top:720px;width:64px">Cape Verde</div>
<div class="m" style="left:645px;top:744px;width:75px">The Solomons</div>
<div class="m" style="left:182px;top:748px;width:46px">Azanian</div>
<div class="m" style="left:776px;top:760px;width:53px">Polynesia</div>
<div class="m" style="left:849px;top:760px;width:60px">E Polynesia</div>
<div class="m" style="left:928px;top:760px;width:78px">Eastern Pacific</div>
<div class="m" style="left:1039px;top:760px;width:80px">Gulf of Panama</div>
<div class="m" style="left:32px;top:768px;width:17px;border-left:0">ea</div>
<div class="m" style="left:1413px;top:768px;width:60px;border-right:0;text-align:left;padding-left:2px">Gulf of Guin</div>
<div class="m" style="left:503px;top:776px;width:55px">Timor Sea</div>
<div class="m" style="left:258px;top:804px;width:62px">West Indian</div>
<div class="m" style="left:372px;top:804px;width:58px">East Indian</div>
<div class="m" style="left:633px;top:812px;width:32px">Coral</div>
<div class="m" style="left:1116px;top:820px;width:50px">Peruvian</div>
<div class="m" style="left:1265px;top:856px;width:76px">Brazilian Coast</div>
<div class="m" style="left:697px;top:868px;width:103px">New Zealand Coast</div>
<div class="m" style="left:807px;top:868px;width:69px">South Pacific</div>
<div class="m" style="left:1012px;top:868px;width:52px">Capricorn</div>
<div class="m" style="left:32px;top:880px;width:49px;border-left:0">ape Basin</div>
<div class="m" style="left:1463px;top:880px;width:10px;border-right:0">C</div>
<div class="m" style="left:894px;top:896px;width:42px">Austral</div>
<div class="m" style="left:100px;top:904px;width:110px">Mozambique Channel</div>
<div class="m" style="left:321px;top:904px;width:101px">Southeastern Indian</div>
<div class="m" style="left:449px;top:904px;width:85px">Cape Naturaliste</div>
<div class="m" style="left:1344px;top:904px;width:109px">Southeastern Atlantic</div>
<div class="m" style="left:625px;top:928px;width:67px">Tasman Sea</div>
<div class="m" style="left:178px;top:952px;width:106px">Southwestern Indian</div>
<div class="m" style="left:1207px;top:952px;width:56px">River Plate</div>
<div class="m" style="left:1262px;top:992px;width:58px">Scotia Sea</div>
<div class="m" style="left:37px;top:1000px;width:77px">Cape Norvegia</div>
<div class="m" style="left:295px;top:1000px;width:65px">South Indian</div>
<div class="m" style="left:432px;top:1000px;width:78px">West Southern</div>
<div class="m" style="left:558px;top:1000px;width:74px">East Southern</div>
<div class="m" style="left:664px;top:1000px;width:55px">Antipodes</div>
<div class="m" style="left:732px;top:1000px;width:110px">Southwestern Pacific</div>
<div class="m" style="left:856px;top:1000px;width:54px">Ross Sea</div>
<div class="m" style="left:951px;top:1000px;width:79px">Amundsen Sea</div>
<div class="m" style="left:1071px;top:1000px;width:72px">Chilean Coast</div>
<div class="m" style="left:1350px;top:1000px;width:74px">South Atlantic</div>
<div class="m" style="left:1186px;top:1020px;width:79px">Drake Passage</div>

<!-- scrollbars -->
<div style="left:32px;top:1035px;width:1458px;height:18px;background:linear-gradient(#111,#d8d0c0 12%,#8c8270 30%,#5a5040 55%,#4c4436 60%,#d8d0c0 80%,#a49a88 90%,#111)"></div>
<div style="left:32px;top:1036px;width:16px;height:16px;background:linear-gradient(135deg,#b0a890,#4a4234);border-right:2px solid #000"></div>
<div style="left:35px;top:1039px;border:5px solid transparent;border-right:7px solid #ddd;border-left:0"></div>
<div style="left:1456px;top:1036px;width:16px;height:16px;background:linear-gradient(135deg,#b0a890,#4a4234)"></div>
<div style="left:1461px;top:1039px;border:5px solid transparent;border-left:7px solid #ddd;border-right:0"></div>
<div style="left:747px;top:1037px;width:14px;height:14px;background:linear-gradient(#eee,#aaa);border:1px solid #333"></div>
<div style="left:1473px;top:258px;width:17px;height:778px;background:linear-gradient(90deg,#111,#d8d0c0 12%,#8c8270 30%,#4c4436 55%,#8c8270 70%,#d8d0c0 85%,#111)"></div>
<div style="left:1474px;top:258px;width:16px;height:15px;background:linear-gradient(135deg,#b0a890,#4a4234)"></div>
<div style="left:1476px;top:260px;border:5px solid transparent;border-bottom:8px solid #ddd;border-top:0"></div>
<div style="left:1475px;top:274px;width:14px;height:15px;background:linear-gradient(90deg,#eee,#aaa);border:1px solid #333"></div>
<div style="left:1474px;top:1019px;width:16px;height:15px;background:linear-gradient(135deg,#b0a890,#4a4234)"></div>
<div style="left:1476px;top:1022px;border:5px solid transparent;border-top:8px solid #ddd;border-bottom:0"></div>
<div style="left:1473px;top:1035px;width:18px;height:18px;background:#d4cec4;border:1px solid #111;border-top:0;border-left:0"></div>

<!-- bottom frame -->
<div class="hf" style="left:20px;top:1063px;width:1483px;height:11px"></div>
<div style="left:21px;top:1065px;width:12px;height:8px;background:#fff;transform:skewX(-35deg)"></div>
<div style="left:36px;top:1065px;width:8px;height:8px;background:#5b9bc4;transform:skewX(-35deg)"></div>
<div class="sc" style="left:2px;top:1058px"></div>

<!-- Weather window -->
<div class="t" style="left:428px;top:0;width:792px"></div>
<div style="left:1219px;top:2px;width:64px;height:21px;background:linear-gradient(#222,#555 40%,#777 70%,#1c1c1c);border:1px solid #111"></div>
<div class="blk" style="left:444px"></div>
<div class="tt" style="left:489px;top:4px;width:300px">Weather Report</div>
<div class="vf" style="left:430px;top:23px;width:20px;height:220px"></div>
<div style="left:1270px;top:23px;width:13px;height:220px;background:linear-gradient(90deg,#000,#888 15%,#555 40%,#333 70%,#666 85%,#111)"></div>
<div style="left:450px;top:23px;width:820px;height:1px;background:#111"></div>
<div class="hf" style="left:450px;top:241px;width:834px;height:15px"></div>
<div style="left:451px;top:246px;width:12px;height:7px;background:#fff;transform:skewX(-35deg)"></div>
<div style="left:467px;top:246px;width:8px;height:7px;background:#fff;transform:skewX(-35deg)"></div>
<div class="sc" style="left:428px;top:0"></div>
<div class="sc" style="left:428px;top:178px"></div>
<div class="sc" style="left:430px;top:238px"></div>

<div class="h" style="left:472px;top:26px;letter-spacing:.78px">Current Weather (die roll = 5)</div>
<div class="h" style="left:867px;top:26px;letter-spacing:.54px">Weather probabilities on next weather roll</div>
<div class="l" style="left:450px;top:48px;width:139px">Arctic:</div><div class="v" style="left:597px;top:48px">Fine</div>
<div class="l" style="left:450px;top:70px;width:139px">North Temperate:</div><div class="v" style="left:597px;top:70px">Fine</div>
<div class="l" style="left:450px;top:92px;width:139px">Mediterranean:</div><div class="v" style="left:597px;top:92px">Fine</div>
<div class="l" style="left:450px;top:114px;width:139px">North Monsoon:</div><div class="v" style="left:597px;top:114px">Storm</div>
<div class="l" style="left:450px;top:136px;width:139px">South Monsoon:</div><div class="v" style="left:597px;top:136px">Fine</div>
<div class="l" style="left:450px;top:158px;width:139px">South Temperate:</div><div class="v" style="left:597px;top:158px">Fine</div>
<div class="l" style="left:450px;top:192px;width:139px">Modifier:</div><div class="v" style="left:597px;top:192px">None</div>
<div class="l" style="left:450px;top:214px;width:139px">Impulse Advance:</div><div class="v" style="left:597px;top:214px">1</div>

<!-- table -->
<div style="left:715px;top:52px;width:547px;height:135px;background:#fff;border:1px solid #ddd"></div>
<svg style="position:absolute;left:716px;top:53px" width="545" height="133" viewBox="0 0 545 133" shape-rendering="crispEdges">
<rect x="1" y="0" width="543" height="19" fill="#2e87b2"/>
<rect x="1" y="19" width="150" height="114" fill="#2e87b2"/>
<rect x="152" y="19" width="393" height="19" fill="#3399ff"/>
<path d="M1 18.5H544M1 37.5H151M1 56.5H151M1 75.5H151M1 94.5H151M1 113.5H151M151.5 0V133M232.5 0V19M315.5 0V19M395.5 0V19M471.5 0V19" stroke="#111" stroke-width="1.6"/>
<path d="M152 37.5H544M152 56.5H544M152 75.5H544M152 94.5H544M152 113.5H544M233 19V133M316 19V133M396 19V133M472 19V133" stroke="#c4c4c4" stroke-width="1"/>
<path d="M0 0V133M0 0H545M152.5 0V19M233.5 0V19M316.5 0V19M396.5 0V19M472.5 0V19" stroke="#fff" stroke-width="1"/>
</svg>
<div class="c cb" style="left:717px;top:53px">Weather Zone</div>
<div class="c cb" style="left:869px;top:53px">Fine</div>
<div class="c cb" style="left:949px;top:53px">Rain</div>
<div class="c cb" style="left:1031px;top:53px">Storm</div>
<div class="c cb" style="left:1112px;top:53px">Snow</div>
<div class="c cb" style="left:1188px;top:53px">Blizzard</div>
<div class="c cb" style="left:717px;top:72px">Arctic</div>
<div class="c cb" style="left:717px;top:91px">North Temperate</div>
<div class="c cb" style="left:717px;top:110px">Mediterranean</div>
<div class="c cb" style="left:717px;top:129px">North Monsoon</div>
<div class="c cb" style="left:717px;top:148px">South Monsoon</div>
<div class="c cb" style="left:717px;top:167px">South Temperate</div>
<div class="c" style="left:869px;top:72px;color:#fff">100%</div><div class="c" style="left:949px;top:72px;color:#fff">0%</div><div class="c" style="left:1031px;top:72px;color:#fff">0%</div><div class="c" style="left:1112px;top:72px;color:#fff">0%</div><div class="c" style="left:1188px;top:72px;color:#fff">0%</div>
<div class="c" style="left:869px;top:91px">100%</div><div class="c" style="left:949px;top:91px">0%</div><div class="c" style="left:1031px;top:91px">0%</div><div class="c" style="left:1112px;top:91px">0%</div><div class="c" style="left:1188px;top:91px">0%</div>
<div class="c" style="left:869px;top:110px">100%</div><div class="c" style="left:949px;top:110px">0%</div><div class="c" style="left:1031px;top:110px">0%</div><div class="c" style="left:1112px;top:110px">0%</div><div class="c" style="left:1188px;top:110px">0%</div>
<div class="c" style="left:869px;top:129px">10%</div><div class="c" style="left:949px;top:129px">30%</div><div class="c" style="left:1031px;top:129px">60%</div><div class="c" style="left:1112px;top:129px">0%</div><div class="c" style="left:1188px;top:129px">0%</div>
<div class="c" style="left:869px;top:148px">100%</div><div class="c" style="left:949px;top:148px">0%</div><div class="c" style="left:1031px;top:148px">0%</div><div class="c" style="left:1112px;top:148px">0%</div><div class="c" style="left:1188px;top:148px">0%</div>
<div class="c" style="left:869px;top:167px">100%</div><div class="c" style="left:949px;top:167px">0%</div><div class="c" style="left:1031px;top:167px">0%</div><div class="c" style="left:1112px;top:167px">0%</div><div class="c" style="left:1188px;top:167px">0%</div>

<!-- Buttons -->
<div class="b" style="left:715px;top:203px;width:100px;height:30px;line-height:28px;padding-left:22px">OK</div>
<svg style="position:absolute;left:746px;top:209px" width="18" height="18" viewBox="0 0 18 18"><path d="M2 10l3-2 3 4 7-10 2 2-9 13z" fill="#118811" stroke="#004" stroke-width="1"/></svg>
<div class="b" style="left:1161px;top:203px;width:100px;height:30px;line-height:28px;padding-left:22px"><u>H</u>elp</div>
<svg style="position:absolute;left:1189px;top:209px" width="17" height="17" viewBox="0 0 17 17"><path d="M1 8l9-6 6 5-9 8z" fill="#7a1f9a" stroke="#301040"/><path d="M8 6c2-1 3 0 2 2" stroke="#ff0" fill="none" stroke-width="1.5"/></svg>

<!-- Legend window -->
<div style="left:1283px;top:0;width:234px;height:23px;background:linear-gradient(#9fc3d8,#7aa9c6 30%,#3a7aa3 65%,#1c557f);border-bottom:1px solid #111"></div>
<div style="left:1298px;top:2px;width:43px;height:21px;background:linear-gradient(#8c7a58,#b8a98a 50%,#4c4230);border:1px solid #111"></div>
<div style="left:1309px;top:9px;border:6px solid transparent;border-top:0;border-bottom:8px solid #eee"></div>
<div class="sc" style="left:1281px;top:0"></div>
<div style="left:1344px;top:4px;color:#111;font:12px/14px 'Liberation Sans',sans-serif;white-space:nowrap">Globe Map Legend</div>
<svg style="position:absolute;left:1458px;top:0" width="45" height="23" viewBox="0 0 42 23"><use href="#uk" opacity=".65"/></svg>
<div style="left:1284px;top:23px;width:21px;height:210px;background:linear-gradient(90deg,#111,#a89c86 12%,#555 28%,#cfc8bc 34%,#6ea7cf 42%,#8cb4d0 52%,#555 60%,#a89c86 75%,#333)"></div>
<div style="left:1305px;top:23px;width:212px;height:1px;background:#111"></div>
<div style="left:1314px;top:33px;font:bold 12.4px 'DejaVu Sans',sans-serif;color:#111">Legend</div>
<div style="left:1316px;top:54px;width:201px;height:166px;background:#fff;border:1px solid #888;border-right:0;border-bottom:0"></div>
<div class="sw" style="top:57px;background:#ffff00"></div><div class="sw2" style="top:57px;background:#808000"></div>
<div class="sw" style="top:77px;background:#00ffff"></div><div class="sw2" style="top:77px;background:#008080"></div>
<div class="sw" style="top:97px;background:#0000ff"></div><div class="sw2" style="top:97px;background:#000080"></div>
<div class="sw" style="top:117px;background:#ff00ff"></div><div class="sw2" style="top:117px;background:#800080"></div>
<div class="sw" style="top:137px;background:#fff;border:1px solid #000"></div><div class="sw2" style="top:137px;background:#c0c0c0"></div>
<div class="lg" style="top:58px">Fine</div>
<div class="lg" style="top:78px">Rain</div>
<div class="lg" style="top:98px">Storm</div>
<div class="lg" style="top:118px">Snow</div>
<div class="lg" style="top:138px">Blizzard</div>
<div class="hf" style="left:1305px;top:220px;width:212px;height:12px"></div>
<div class="sc" style="left:1285px;top:218px"></div>
<div style="left:1293px;top:232px;width:210px;height:2px;background:#333"></div>
<div style="left:1270px;top:232px;width:23px;height:24px;background:linear-gradient(90deg,#222,#777,#222)"></div>
<div class="sc" style="left:1273px;top:238px"></div>
</div></body></html>
